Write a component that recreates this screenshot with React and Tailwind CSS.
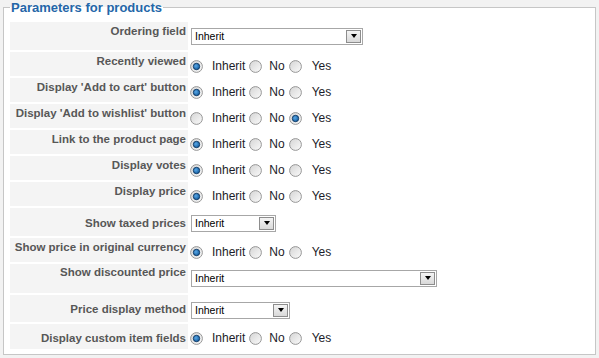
import React from "react";

const rows = [
  { label: "Ordering field", h: 28, lt: 2, type: "select", w: 172, ct: 6 },
  { label: "Recently viewed", h: 24, lt: 2, type: "radio", v: 0 },
  { label: "Display 'Add to cart' button", h: 24, lt: 2, type: "radio", v: 0 },
  { label: "Display 'Add to wishlist' button", h: 24, lt: 2, type: "radio", v: 2 },
  { label: "Link to the product page", h: 24, lt: 2, type: "radio", v: 0 },
  { label: "Display votes", h: 24, lt: 2, type: "radio", v: 0 },
  { label: "Display price", h: 24, lt: 2, type: "radio", v: 0 },
  { label: "Show taxed prices", h: 28, lt: 8, type: "select", w: 85, ct: 7 },
  { label: "Show price in original currency", h: 24, lt: 2, type: "radio", v: 0 },
  { label: "Show discounted price", h: 29, lt: 1, type: "select", w: 246, ct: 6 },
  { label: "Price display method", h: 27, lt: 7, type: "select", w: 99, ct: 7 },
  { label: "Display custom item fields", h: 25, lt: 7, type: "radio", v: 0 },
];

function Radio({ checked }) {
  return (
    <svg width="13" height="13" viewBox="0 0 13 13" className="shrink-0">
      <defs>
        <linearGradient id="rg" x1="0" y1="0" x2="1" y2="1">
          <stop offset="0" stopColor="#d4d4d4" />
          <stop offset="1" stopColor="#fbfbfb" />
        </linearGradient>
        <radialGradient id="dot" cx="0.4" cy="0.4" r="0.6">
          <stop offset="0" stopColor="#5aa8e6" />
          <stop offset="1" stopColor="#1560a3" />
        </radialGradient>
      </defs>
      <circle cx="6.5" cy="6.5" r="5.9" fill="url(#rg)" stroke="#979797" strokeWidth="1" />
      {checked && <circle cx="6.5" cy="6.5" r="3.2" fill="url(#dot)" stroke="#0d3560" strokeWidth="0.9" />}
    </svg>
  );
}

function RadioGroup({ v }) {
  return (
    <div className="flex items-center h-[13px] text-[12px] leading-[13px] text-[#1c1c28]">
      <Radio checked={v === 0} />
      <span className="ml-[9px]">Inherit</span>
      <span className="ml-[4px]"><Radio checked={v === 1} /></span>
      <span className="ml-[7px]">No</span>
      <span className="ml-[4px]"><Radio checked={v === 2} /></span>
      <span className="ml-[10px]">Yes</span>
    </div>
  );
}

function Select({ w }) {
  return (
    <div
      className="ml-[1px] h-[17px] flex items-stretch border border-[#a7a7a7] bg-white"
      style={{ width: w }}
    >
      <span className="flex-1 pl-[3px] text-[10.5px] leading-[15px] text-black">Inherit</span>
      <span className="m-[1px] w-[15px] flex items-end justify-center pb-[4px] border border-[#8d8d8d] bg-gradient-to-b from-[#f4f4f4] to-[#d9d9d9]">
        <span className="w-0 h-0 border-l-[3.5px] border-r-[3.5px] border-t-[4px] border-l-transparent border-r-transparent border-t-black" />
      </span>
    </div>
  );
}

export default function App() {
  return (
    <div className="w-[599px] h-[358px] bg-[#f2f2f2] overflow-hidden" style={{ fontFamily: "'Liberation Sans', Arial, sans-serif" }}>
      <fieldset className="mx-[3px] w-[593px] h-[355px] border border-[#c6c6c6] bg-white px-[6px] pt-[7px]">
        <legend className="px-[1px] text-[13px] leading-[15px] font-bold text-[#2466a8]">
          Parameters for products
        </legend>
        <div className="flex flex-col gap-[2px]">
          {rows.map((r) => (
            <div key={r.label} className="flex gap-[2px]" style={{ height: r.h }}>
              <div
                className="w-[178px] shrink-0 bg-[#f4f4f4] text-right pr-[2px] text-[11.5px] leading-[14px] font-bold text-[#575757] whitespace-nowrap"
                style={{ paddingTop: r.lt }}
              >
                {r.label}
              </div>
              <div style={{ paddingTop: r.type === "radio" ? 8 : r.ct }}>
                {r.type === "radio" ? <RadioGroup v={r.v} /> : <Select w={r.w} />}
              </div>
            </div>
          ))}
        </div>
      </fieldset>
    </div>
  );
}
